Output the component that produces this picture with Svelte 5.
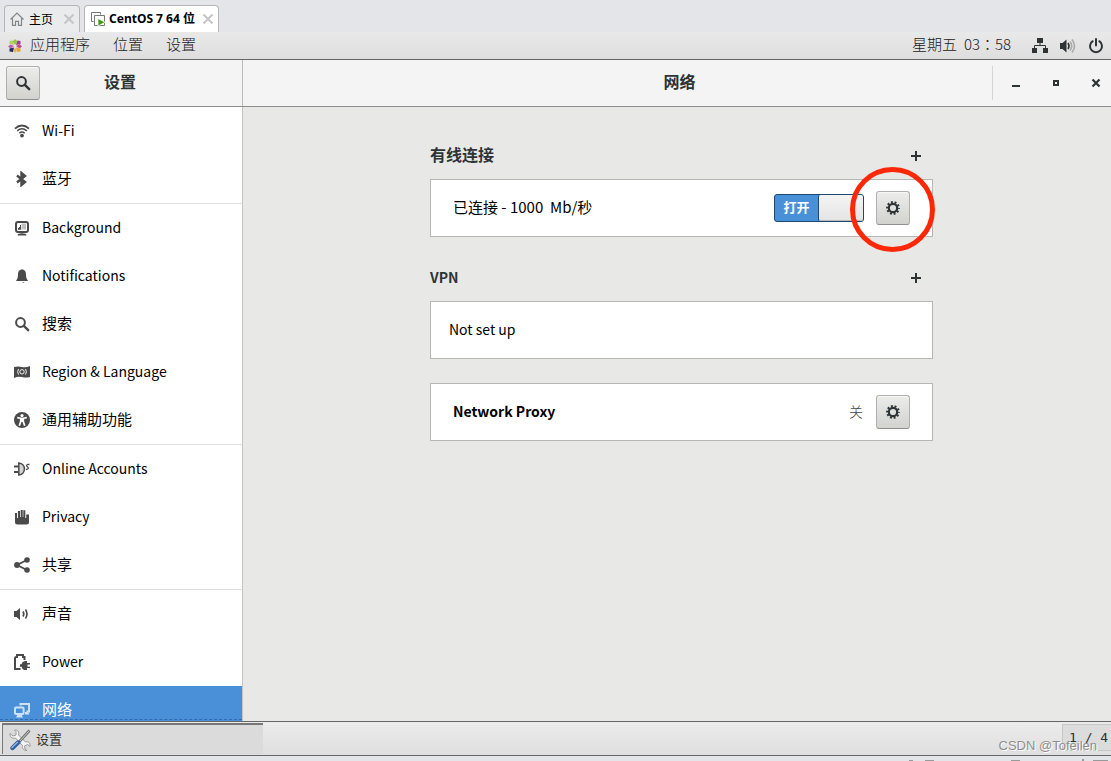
<script>
    const groups = [
        [
            { icon: 'wifi', label: 'Wi-Fi' },
            { icon: 'bluetooth', label: '蓝牙', cjk: true }
        ],
        [
            { icon: 'background', label: 'Background' },
            { icon: 'bell', label: 'Notifications' },
            { icon: 'search', label: '搜索', cjk: true },
            { icon: 'region', label: 'Region & Language' },
            { icon: 'access', label: '通用辅助功能', cjk: true }
        ],
        [
            { icon: 'accounts', label: 'Online Accounts' },
            { icon: 'privacy', label: 'Privacy' },
            { icon: 'share', label: '共享', cjk: true }
        ],
        [
            { icon: 'sound', label: '声音', cjk: true },
            { icon: 'power', label: 'Power' },
            { icon: 'network', label: '网络', cjk: true }
        ]
    ];

    let selected = $state('network');
    let wired = $state(true);
</script>

{#snippet icon(name)}
    <svg class="icon" viewBox="0 0 16 16" width="16" height="16" aria-hidden="true">
        {#if name === 'wifi'}
            <g fill="none" stroke="currentColor">
                <path d="M1 5.6Q8-.6 15 5.6" stroke-width="1.8" />
                <path d="M3.2 7.9Q8 3.7 12.8 7.9" stroke-width="1.5" />
                <path d="M5.3 10.2Q8 7.8 10.7 10.2" stroke-width="1.4" />
            </g>
            <circle cx="8" cy="12.6" r="1.9" fill="currentColor" />
        {:else if name === 'bluetooth'}
            <path d="M3 4.5 11 11 7.5 14V2L11 5 3 11.5" fill="none" stroke="currentColor" stroke-width="2.4" />
        {:else if name === 'background'}
            <rect x="2" y="1.900" width="12" height="10" rx="2" fill="none" stroke="currentColor" stroke-width="2" />
            <path d="M7.5 3.5H12v6H7.500z" fill="currentColor" opacity=".35" />
            <path d="M4 9.800V8h1V7h1V5h1v4.800zM4 14q4-1.500 8 0l.5 1.500h-9z" fill="currentColor" />
        {:else if name === 'bell'}
            <path d="M8 1.500c3 0 4 2.500 4 5 0 3 .7 4.500 2 6.500H2c1.300-2 2-3.500 2-6.500 0-2.500 1-5 4-5zM8 14h2.500q-1 1.300-2.500 0z" fill="currentColor" />
        {:else if name === 'search'}
            <circle cx="6.500" cy="6.500" r="4.400" fill="none" stroke="currentColor" stroke-width="2" />
            <path d="m9.800 9.800 4.400 4.400" stroke="currentColor" stroke-width="2.400" stroke-linecap="round" />
        {:else if name === 'region'}
            <path d="M0 3q4-1 8 0t8-1v11q-4 1-8 0t-8 1z" fill="currentColor" />
            <g fill="none" stroke="#fff" stroke-width=".9">
                <circle cx="8" cy="7.800" r="2.200" />
                <path d="M4.500 5q-1.700 2.800 0 5.600M11.500 5q1.700 2.800 0 5.600" />
            </g>
        {:else if name === 'access'}
            <circle cx="8" cy="8" r="8" fill="currentColor" />
            <circle cx="8" cy="3.600" r="1.600" fill="#fff" />
            <path d="m3.200 5.700 4.800.8 4.800-.8M8 6v4M6.700 6.500v3l-1.400 4.300M9.300 6.500v3l1.400 4.300" fill="none" stroke="#fff" stroke-width="1.700" />
        {:else if name === 'accounts'}
            <path d="M0 4.500h4v2H0zM0 10h4v2H0z" fill="currentColor" />
            <path d="M4.800 2v12c7.500-.5 7.500-11.500 0-12z" fill="currentColor" fill-opacity=".25" stroke="currentColor" stroke-width="1.500" />
            <path d="M15.500 3.500c-3-.6-3.500 1.200-2.200 2.200s1.800 2.300-1.300 2.800" fill="none" stroke="currentColor" stroke-width="1.300" />
        {:else if name === 'privacy'}
            <path d="M1 4h2v5h.9V2H6v6h.7V1h2v7h.6V1.200h2V9h.9V5.500H15V13q0 2.500-2.500 2.500h-9Q1 15.500 1 13z" fill="currentColor" />
        {:else if name === 'share'}
            <path d="m13 3-10 5 10 5" fill="none" stroke="currentColor" stroke-width="1.900" />
            <g fill="currentColor"><circle cx="3" cy="8" r="2.900" /><circle cx="13" cy="3" r="2.800" /><circle cx="13" cy="13" r="2.800" /></g>
        {:else if name === 'sound'}
            <path d="M0 5h2.500L6 2v12l-3.500-3H0z" fill="currentColor" />
            <path d="M9 5.500q1.600 2.500 0 5M11.500 3.500q3 4.500 0 9" fill="none" stroke="currentColor" stroke-width="1.600" />
        {:else if name === 'power'}
            <path d="M6.500 15H1V4q0-1 1.500-1H3V1h6v2h1.500v3" fill="none" stroke="currentColor" stroke-width="2" />
            <path d="M13 7v2h3v1.500h-2.500v2.200H16V14h-3v2h-3q-2-1-2.500-3.200H6v-2.500h1.500Q8 7.500 11 7z" fill="currentColor" />
        {:else if name === 'network'}
            <path d="M6.500 3.500V2h8.500V9.500H12.500" fill="none" stroke="currentColor" stroke-width="2" />
            <rect x="1" y="5.500" width="8.600" height="6.500" rx="1" fill="none" stroke="currentColor" stroke-width="2" />
            <path d="m2 15.500 1.500-2.700h4L9 15.500zM11 10h3l1.500 2.500H11z" fill="currentColor" />
        {:else if name === 'gear'}
            <g fill="none" stroke="currentColor">
                <circle cx="8" cy="8" r="4.200" stroke-width="2.200" />
                <circle cx="8" cy="8" r="5.900" stroke-width="2" stroke-dasharray="1.900 1.807" stroke-dashoffset=".95" />
            </g>
        {:else if name === 'plus'}
            <path d="M3 8h10M8 3v10" stroke="currentColor" stroke-width="2" />
        {:else if name === 'lan'}
            <path d="M5 0h6v5H5zM0 10h5v5H0zM11 10h5v5h-5z" fill="currentColor" />
            <path d="M8 4v4M2.500 11V7.500h11V11" fill="none" stroke="currentColor" />
        {:else if name === 'volume'}
            <path d="M0 5h2.500L6.500 1.500v13L2.500 11H0z" fill="currentColor" />
            <path d="M8 5q2 3 0 6" fill="none" stroke="currentColor" stroke-width="1.600" />
            <path d="M10 3.500q3.500 4.500 0 9M12 1.500q5 6.500 0 13" fill="none" stroke="#aaa" stroke-width="1.600" />
        {:else if name === 'shutdown'}
            <path d="M4.700 3.200a6 6 0 1 0 6.600 0M8 1v6.500" fill="none" stroke="currentColor" stroke-width="2" stroke-linecap="round" />
        {:else if name === 'minimize'}
            <path d="M4 11h8" stroke="currentColor" stroke-width="2" />
        {:else if name === 'maximize'}
            <rect x="6" y="6" width="4" height="4" fill="none" stroke="currentColor" stroke-width="2" />
        {:else if name === 'close'}
            <path d="m4.500 4.500 7 7M11.500 4.500l-7 7" stroke="currentColor" stroke-width="2.200" />
        {:else if name === 'cross'}
            <path d="m3.500 3.500 9 9M12.500 3.500l-9 9" stroke="#c4c4c4" stroke-width="1.900" />
        {:else if name === 'home'}
            <path d="m1.500 8.500 6.500-6.500 6.500 6.500M3.500 7.500v6.800h3v-4h3v4h3V7.500" fill="none" stroke="#858585" stroke-width="1.200" />
        {:else if name === 'vm'}
            <path d="M3.500 10.500h-2v-9h9v2M4.500 14.500v-10h10v10z" fill="none" stroke="#777" />
            <path d="M8 7.500v7.500l7-3.700z" fill="#43980d" stroke="#fff" stroke-width=".7" />
        {:else if name === 'centos'}
            <path d="M8 1 5.500 3.500 8 7l2.500-3.500z" fill="#97c93c" /><path d="m2.500 3 3-.5L7 7 2.500 6z" fill="#b5cf69" />
            <path d="m10.500 2.500 3 .5v3L9 7z" fill="#9c3e94" /><path d="m1 8.500 2.500-2L7 8l-3.500 2.500z" fill="#c05cae" />
            <path d="m9 8 3.500-2L15 8.500l-2.500 2z" fill="#c04a8c" /><path d="m2.500 10.500 4.500-1L6 14l-3.500-.5z" fill="#29286c" />
            <path d="m9 9.500 4.500 1v3L10 14z" fill="#e9a23b" /><path d="m8 9.500 1.500 3L8 15l-1.500-2.500z" fill="#e7b43c" />
        {/if}
    </svg>
{/snippet}

<div class="desktop">
    <nav class="tabs" aria-label="虚拟机">
        <div class="tab">
            {@render icon('home')}
            <span>主页</span>
            <button aria-label="关闭主页">{@render icon('cross')}</button>
        </div>
        <div class="tab active">
            {@render icon('vm')}
            <span>CentOS 7 64 位</span>
            <button aria-label="关闭虚拟机">{@render icon('cross')}</button>
        </div>
    </nav>

    <div class="panel">
        <button class="apps">{@render icon('centos')}<span>应用程序</span></button>
        <button><span>位置</span></button>
        <button><span>设置</span></button>
        <div class="status">
            <time><span>星期五</span><span>03：58</span></time>
            <button aria-label="网络">{@render icon('lan')}</button>
            <button aria-label="音量">{@render icon('volume')}</button>
            <button aria-label="电源">{@render icon('shutdown')}</button>
        </div>
    </div>

    <header>
        <div class="side-head">
            <button class="raised" aria-label="搜索">{@render icon('search')}</button>
            <h1>设置</h1>
        </div>
        <div class="main-head">
            <h1>网络</h1>
            <div class="window-buttons">
                <button aria-label="最小化">{@render icon('minimize')}</button>
                <button aria-label="最大化">{@render icon('maximize')}</button>
                <button aria-label="关闭">{@render icon('close')}</button>
            </div>
        </div>
    </header>

    <div class="content">
        <aside>
            {#each groups as group}
                <ul>
                    {#each group as item}
                        <li>
                            <button
                                class="item"
                                class:selected={selected === item.icon}
                                onclick={() => (selected = item.icon)}
                            >
                                {@render icon(item.icon)}
                                <span class:cjk={item.cjk}>{item.label}</span>
                            </button>
                        </li>
                    {/each}
                </ul>
            {/each}
        </aside>

        <main>
            <div class="column">
                <section>
                    <div class="section-head">
                        <h2 class="cjk">有线连接</h2>
                        <button aria-label="添加有线连接">{@render icon('plus')}</button>
                    </div>
                    <div class="card">
                        <span class="name cjk">已连接 - 1000&nbsp; Mb/秒</span>
                        <label class="switch">
                            <input type="checkbox" bind:checked={wired} aria-label="有线连接" />
                            <span class="state">{wired ? '打开' : ''}</span>
                            <span class="knob"></span>
                        </label>
                        <div class="marked">
                            <button class="raised" aria-label="有线选项">{@render icon('gear')}</button>
                            <div class="ring"></div>
                        </div>
                    </div>
                </section>

                <section class="vpn">
                    <div class="section-head">
                        <h2>VPN</h2>
                        <button aria-label="添加 VPN">{@render icon('plus')}</button>
                    </div>
                    <div class="card empty"><span class="name">Not set up</span></div>
                </section>

                <section class="card">
                    <strong class="name">Network Proxy</strong>
                    <span class="off">关</span>
                    <button class="raised" aria-label="代理选项">{@render icon('gear')}</button>
                </section>
            </div>
        </main>
    </div>

    <footer>
        <button class="task">
            <svg width="22" height="22" viewBox="0 0 22 22" aria-hidden="true">
                <path d="M1 4.500 4 7l3-1V2.500L5.500 1C9 .5 10.500 3 9.500 6l7 7c3-1 5 1 4.500 4.500l-2.500-2-3 1.500.5 3 2 1.500c-3.500 0-5-2-4.500-5L6.500 9C3 10 .8 8 1 4.500z" fill="#f4f4f2" stroke="#999" />
                <path d="M20.500 1.500 10 13" stroke="#6c6c6c" stroke-width="2.600" />
                <path d="M20 2 10.500 12.500" stroke="#ddd" stroke-width=".9" />
                <path d="M9 13.500 3.500 19" stroke="#2f5d9e" stroke-width="4.400" stroke-linecap="round" />
                <path d="M8.500 13.300 3 18.500" stroke="#8fb4e0" stroke-width="1.500" stroke-linecap="round" />
            </svg>
            <span>设置</span>
        </button>
        <div class="pager">1 / 4</div>
        <div class="watermark">CSDN @Tofeilen</div>
    </footer>
    <div class="tray">
        <svg width="204" height="5" viewBox="0 0 204 5" aria-hidden="true">
            <path d="M2 5h4M18 5h9M104 5h9M176 3v2M186 5h15" stroke="#999" stroke-width="2" />
        </svg>
    </div>
</div>

<style>
    :global(body) {
        margin: 0;
        color: #2e3436;
        font-family: "Noto Sans CJK SC", sans-serif;
        font-size: 14px;
    }

    .desktop {
        display: flex;
        flex-direction: column;
        height: 100vh;
        overflow: hidden;
        background: #e8e8e6;
    }

    button {
        display: flex;
        align-items: center;
        margin: 0;
        padding: 0;
        border: 0;
        background: none;
        color: inherit;
        font: inherit;
    }

    .icon {
        display: block;
        flex: none;
    }

    h1, h2 {
        margin: 0;
        font-size: 16px;
        font-weight: bold;
    }

    .tabs {
        display: flex;
        flex: none;
        align-items: flex-end;
        gap: 4px;
        box-sizing: border-box;
        height: 32px;
        padding: 0 4px;
        background: #e3e5e8;
    }

    .tab {
        display: flex;
        align-items: center;
        gap: 4px;
        box-sizing: border-box;
        height: 27px;
        padding: 0 2px 0 4px;
        border: 1px solid #b4b6b9;
        border-bottom: 0;
        border-radius: 4px 4px 0 0;
        background: #eaebed;
        color: #000;
        font-size: 12px;
    }

    .tab span, .task span {
        padding-bottom: 2px;
    }

    .tab button {
        margin-left: 4px;
    }

    .tab.active {
        gap: 3px;
        padding-left: 5px;
        background: #fff;
        font-family: "Noto Sans", "Noto Sans CJK SC", sans-serif;
        font-weight: bold;
    }

    .tab.active button {
        margin-left: 2px;
    }

    .panel {
        display: flex;
        flex: none;
        align-items: center;
        gap: 23px;
        box-sizing: border-box;
        height: 28px;
        padding: 0 7px;
        border-bottom: 1px solid #666;
        background: linear-gradient(#e9e9e9, #dedede);
        font-size: 15px;
        line-height: 22px;
    }

    .panel span {
        padding-bottom: 4px;
        color: #1c2022;
        font-weight: 300;
    }

    .apps {
        gap: 7px;
    }

    .status {
        display: flex;
        align-items: center;
        gap: 12px;
        margin-left: auto;
    }

    /* the TC face centres the full-width colon */
    time {
        display: flex;
        gap: 7px;
        margin-right: 9px;
        font-family: "Noto Sans CJK TC", sans-serif;
    }

    header {
        display: flex;
        flex: none;
        box-sizing: border-box;
        height: 47px;
        border-bottom: 1px solid #8b8e8a;
        background: #f4f4f4;
    }

    .side-head {
        display: flex;
        align-items: center;
        box-sizing: border-box;
        width: 243px;
        padding: 0 42px 0 6px;
        border-right: 1px solid #bbb;
    }

    header h1 {
        flex: 1;
        padding-bottom: 4px;
        text-align: center;
    }

    .main-head {
        display: flex;
        flex: 1;
        align-items: center;
    }

    .main-head h1 {
        padding-left: 124px;
    }

    .window-buttons {
        display: flex;
        align-items: center;
        gap: 24px;
        height: 34px;
        padding: 0 7px 0 15px;
        border-left: 1px solid #d5d5d5;
    }

    .raised {
        flex: none;
        justify-content: center;
        box-sizing: border-box;
        width: 34px;
        height: 34px;
        border: 1px solid #b0b0ad;
        border-bottom-color: #8f8f8b;
        border-radius: 3px;
        background: linear-gradient(#ececeb, #d2d2cf);
        box-shadow: inset 0 1px #f8f8f8;
        color: #2e3436;
    }

    .content {
        display: flex;
        flex: 1;
        min-height: 0;
        overflow: hidden;
    }

    aside {
        position: relative;
        flex: none;
        width: 242px;
        border-right: 1px solid #c4c4c2;
        background: #fff;
        overflow: hidden;
    }

    /* more rows below the fold */
    aside::after {
        content: "";
        position: absolute;
        right: 0;
        bottom: 1px;
        left: 0;
        border-top: 1px dashed #2d6cb0;
    }

    ul {
        margin: 0;
        padding: 0;
        list-style: none;
    }

    ul + ul {
        border-top: 1px solid #e0e0e0;
    }

    .item {
        gap: 12px;
        width: 100%;
        height: 48px;
        padding-left: 14px;
        color: #4a4a4a;
        text-align: left;
    }

    .item span {
        padding-bottom: 2px;
        color: #000;
    }

    .cjk {
        font-size: 15px;
    }

    .item .cjk {
        padding-bottom: 4px;
    }

    .item.selected {
        background: #4a90d9;
        color: #cfe1f5;
    }

    .item.selected span {
        color: #fff;
    }

    main {
        flex: 1;
        padding: 36px 0 0 9px;
    }

    .column {
        display: flex;
        flex-direction: column;
        gap: 24px;
        max-width: 503px;
        margin: 0 auto;
    }

    .vpn {
        margin-top: 4px;
    }

    .section-head {
        display: flex;
        align-items: center;
        justify-content: space-between;
        height: 26px;
        margin-bottom: 10px;
        padding-right: 9px;
    }

    h2 {
        padding-bottom: 2px;
        font-size: 14px;
    }

    h2.cjk {
        padding-bottom: 4px;
        font-size: 16px;
    }

    .card {
        display: flex;
        align-items: center;
        box-sizing: border-box;
        height: 58px;
        padding: 0 22px;
        border: 1px solid #b6b6b3;
        background: #fff;
        color: #000;
    }

    .card.empty {
        padding: 0 18px;
    }

    .name {
        flex: 1;
        padding-bottom: 2px;
    }

    .name.cjk {
        padding-bottom: 4px;
    }

    .off {
        margin-right: 13px;
        padding-bottom: 2px;
        color: #444;
        font-weight: 300;
    }

    .switch {
        position: relative;
        display: flex;
        box-sizing: border-box;
        width: 90px;
        height: 28px;
        margin-right: 12px;
        border: 1px solid #1c4777;
        border-radius: 3px;
        background: #4a90d9;
    }

    .switch input {
        position: absolute;
        inset: 0;
        margin: 0;
        opacity: 0;
    }

    .state {
        flex: 1;
        color: #fff;
        font-size: 13px;
        font-weight: bold;
        line-height: 24px;
        text-align: center;
    }

    .knob {
        width: 44px;
        border-left: 1px solid #1c4777;
        border-radius: 2px;
        background: linear-gradient(#f4f4f4, #e4e4e4);
        box-shadow: inset 0 -1px #b8b8b8;
    }

    .marked {
        position: relative;
    }

    .ring {
        position: absolute;
        top: -24px;
        left: -26px;
        box-sizing: border-box;
        width: 85px;
        height: 85px;
        border: 5px solid #fb2807;
        border-radius: 50%;
        pointer-events: none;
    }

    footer {
        position: relative;
        display: flex;
        flex: none;
        align-items: center;
        justify-content: space-between;
        box-sizing: border-box;
        height: 35px;
        padding-left: 2px;
        border: solid #666;
        border-width: 1px 0;
        background: linear-gradient(#ececec, #dfdfdf);
    }

    .task {
        gap: 5px;
        box-sizing: border-box;
        width: 261px;
        height: 31px;
        padding-left: 6px;
        border: solid #777;
        border-width: 2px 0 0 1px;
        background: #dbdbdb;
        font-size: 13px;
    }

    .pager {
        box-sizing: border-box;
        width: 49px;
        height: 27px;
        margin-bottom: 2px;
        padding-left: 6px;
        border: 1px solid #c6c6c6;
        border-right: 0;
        background: #dcdcdc;
        font-family: "DejaVu Sans Mono", monospace;
        font-size: 13px;
        line-height: 25px;
        white-space: nowrap;
    }

    .watermark {
        position: absolute;
        right: 14px;
        bottom: 0;
        color: #8e8e8e;
        font: 13px/18px "Liberation Sans", sans-serif;
        text-shadow: 1px 1px #fff;
    }

    .tray {
        display: flex;
        flex: none;
        justify-content: flex-end;
        height: 5px;
        background: #e3e5e8;
    }
</style>
